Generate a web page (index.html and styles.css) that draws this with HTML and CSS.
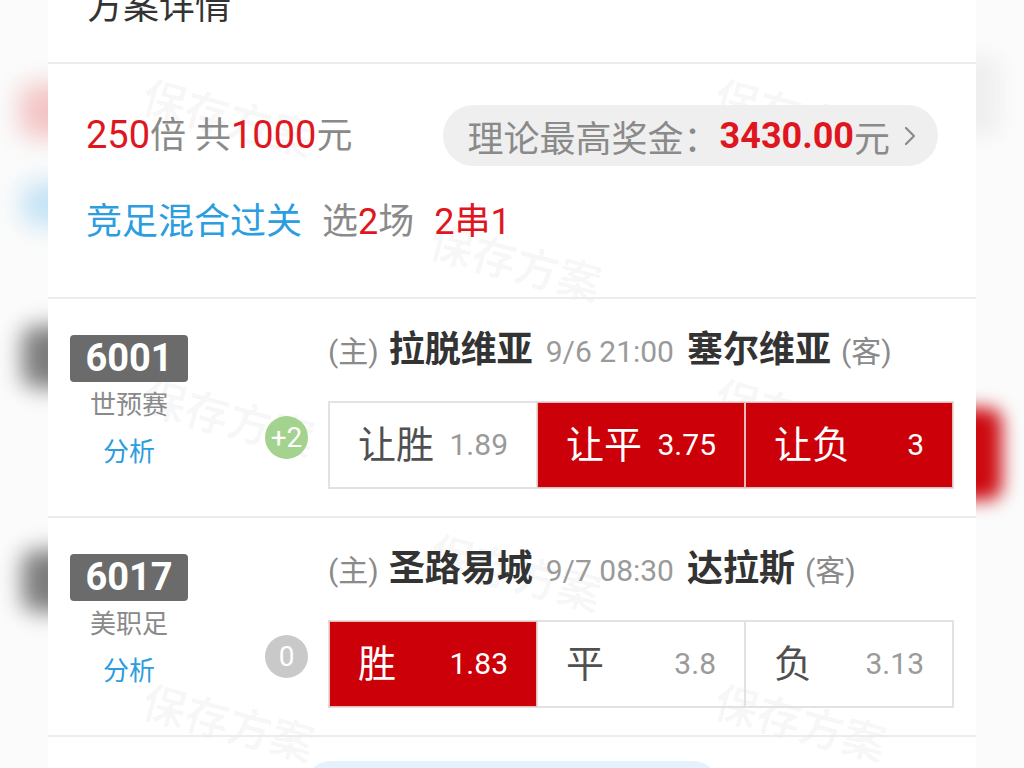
FILE: index.html
```html
<!DOCTYPE html>
<html lang="zh-CN">
<head>
  <meta charset="UTF-8" />
  <meta name="viewport" content="width=device-width, initial-scale=1.0"/>
  <title>方案详情</title>
  <link rel="stylesheet" href="styles.css">
</head>
<body>
  <!-- blurred copy of the screen behind the column -->
  <div class="backdrop">
    <div class="blob pink"></div>
    <div class="blob blue"></div>
    <div class="blob gray g1"></div>
    <div class="blob gray g2"></div>
    <div class="blob light"></div>
    <div class="blob red-blob"></div>
  </div>

  <div class="sheet">
    <div class="watermarks">
      <span class="wm">保存方案</span>
      <span class="wm">保存方案</span>
      <span class="wm">保存方案</span>
      <span class="wm">保存方案</span>
      <span class="wm">保存方案</span>
      <span class="wm">保存方案</span>
      <span class="wm">保存方案</span>
      <span class="wm">保存方案</span>
    </div>

    <div class="page-head">
      <h1>方案详情</h1>
    </div>

    <!-- summary -->
    <div class="summary">
      <div class="summary-top">
        <div class="stake">
          <span class="amount red">250</span>倍 共<span class="amount red">1000</span>元
        </div>
        <a class="prize" href="#">
          理论最高奖金：<b class="red">3430.00</b>元
          <svg class="chevron" width="14" height="20" viewBox="0 0 14 20">
            <path d="M3 2 L11 10 L3 18" fill="none" stroke="#8a8a8a" stroke-width="2.2" stroke-linecap="round" stroke-linejoin="round"/>
          </svg>
        </a>
      </div>
      <div class="play">
        <span class="blue-text">竞足混合过关</span>
        <span class="pick">选<span class="red">2</span>场</span>
        <span class="red pass">2串1</span>
      </div>
    </div>

    <!-- match 1 -->
    <div class="match">
      <div class="match-info">
        <div class="code">6001</div>
        <div class="league">世预赛</div>
        <a class="analysis" href="#">分析</a>
      </div>
      <div class="match-main">
        <div class="teams">
          <span class="side">(主)</span>
          <span class="team">拉脱维亚</span>
          <span class="time">9/6 21:00</span>
          <span class="team">塞尔维亚</span>
          <span class="side">(客)</span>
        </div>
        <div class="handicap plus">+2</div>
        <div class="options">
          <div class="cell"><span class="opt-name">让胜</span><span class="odds">1.89</span></div>
          <div class="cell on"><span class="opt-name">让平</span><span class="odds">3.75</span></div>
          <div class="cell on"><span class="opt-name">让负</span><span class="odds">3</span></div>
        </div>
      </div>
    </div>

    <!-- match 2 -->
    <div class="match">
      <div class="match-info">
        <div class="code">6017</div>
        <div class="league">美职足</div>
        <a class="analysis" href="#">分析</a>
      </div>
      <div class="match-main">
        <div class="teams">
          <span class="side">(主)</span>
          <span class="team">圣路易城</span>
          <span class="time">9/7 08:30</span>
          <span class="team">达拉斯</span>
          <span class="side">(客)</span>
        </div>
        <div class="handicap zero">0</div>
        <div class="options">
          <div class="cell on"><span class="opt-name">胜</span><span class="odds">1.83</span></div>
          <div class="cell"><span class="opt-name">平</span><span class="odds">3.8</span></div>
          <div class="cell"><span class="opt-name">负</span><span class="odds">3.13</span></div>
        </div>
      </div>
    </div>

    <div class="footer">
      <div class="save-btn"></div>
    </div>
  </div>
</body>
</html>
```

FILE: styles.css
```css
* {
  box-sizing: border-box;
}
body {
  margin: 0;
  height: 768px;
  overflow: hidden;
  background: #fbfbfb;
  font-family: Roboto, "Noto Sans CJK SC", sans-serif;
  color: #333;
  position: relative;
}
a {
  text-decoration: none;
}
.red {
  color: #e0161f;
}

/* blurred background */
.backdrop {
  position: absolute;
  inset: 0;
  overflow: hidden;
}
.blob {
  position: absolute;
  border-radius: 14px;
}
.pink {
  left: 20px;
  top: 84px;
  width: 70px;
  height: 54px;
  background: #f3c4c4;
  filter: blur(12px);
}
.blue {
  left: 22px;
  top: 182px;
  width: 70px;
  height: 44px;
  background: #c4e2f5;
  filter: blur(12px);
}
.gray {
  left: 22px;
  width: 80px;
  height: 62px;
  background: #7c7c7c;
  filter: blur(11px);
}
.g1 {
  top: 326px;
}
.g2 {
  top: 550px;
}
.light {
  left: 940px;
  top: 56px;
  width: 60px;
  height: 80px;
  background: #efefef;
  filter: blur(10px);
}
.red-blob {
  left: 930px;
  top: 408px;
  width: 72px;
  height: 92px;
  background: #cc0a10;
  filter: blur(9px);
}

/* white column */
.sheet {
  position: relative;
  isolation: isolate;
  width: 928px;
  margin: 0 auto;
  background: #fff;
  min-height: 768px;
}
.watermarks {
  position: absolute;
  inset: 0;
  z-index: -1;
  overflow: hidden;
}
.wm {
  position: absolute;
  width: 180px;
  font-size: 44px;
  font-weight: bold;
  line-height: 50px;
  color: rgba(0, 0, 0, 0.03);
  transform: rotate(15deg);
  white-space: nowrap;
}
.wm:nth-child(1) { left: 92px; top: 95px; }
.wm:nth-child(2) { left: 664px; top: 95px; }
.wm:nth-child(3) { left: 379px; top: 240px; }
.wm:nth-child(4) { left: 92px; top: 395px; }
.wm:nth-child(5) { left: 664px; top: 395px; }
.wm:nth-child(6) { left: 379px; top: 550px; }
.wm:nth-child(7) { left: 92px; top: 700px; }
.wm:nth-child(8) { left: 664px; top: 700px; }

.page-head {
  height: 64px;
  border-bottom: 2px solid #ececec;
  padding-left: 39px;
}
.page-head h1 {
  margin: 0;
  font-size: 36px;
  font-weight: normal;
  line-height: 14px;
  color: #333;
}

/* summary */
.summary {
  padding: 41px 38px 55px 38px;
  border-bottom: 2px solid #ececec;
}
.summary-top {
  display: flex;
  align-items: center;
  justify-content: space-between;
  height: 61px;
}
.stake {
  font-size: 36px;
  color: #8a8a8a;
  line-height: 40px;
}
.amount {
  font-size: 38px;
}
.prize {
  display: flex;
  align-items: center;
  height: 61px;
  padding: 0 21px 0 25px;
  background: #efefef;
  border-radius: 31px;
  font-size: 36px;
  color: #8a8a8a;
}
.prize b {
  font-weight: bold;
}
.chevron {
  margin-left: 13px;
}
.play {
  margin-top: 36px;
  font-size: 36px;
  line-height: 40px;
  color: #8a8a8a;
  display: flex;
  gap: 20px;
}
.blue-text {
  color: #2b9de0;
}

/* match rows */
.match {
  display: flex;
  padding: 36px 22px 27px;
  border-bottom: 2px solid #ececec;
}
.match-info {
  width: 118px;
  display: flex;
  flex-direction: column;
  align-items: center;
}
.code {
  width: 118px;
  height: 47px;
  line-height: 47px;
  text-align: center;
  background: #6b6b6b;
  border-radius: 4px;
  color: #fff;
  font-size: 38px;
  font-weight: bold;
}
.league {
  margin-top: 8px;
  font-size: 26px;
  line-height: 30px;
  color: #8a8a8a;
}
.analysis {
  margin-top: 17px;
  font-size: 26px;
  line-height: 30px;
  color: #2b9de0;
}
.match-main {
  flex: 1;
  margin-left: 77px;
  display: grid;
  grid-template-columns: 43px 1fr;
  column-gap: 20px;
}
.teams {
  grid-column: 2;
  grid-row: 1;
  height: 30px;
  margin-bottom: 36px;
  display: flex;
  align-items: baseline;
  gap: 10px;
  line-height: 30px;
  white-space: nowrap;
}
.side {
  font-size: 30px;
  color: #8a8a8a;
}
.team {
  font-size: 36px;
  font-weight: bold;
  color: #333;
}
.time {
  font-size: 30px;
  color: #9a9a9a;
  margin: 0 3px;
}
.handicap {
  grid-column: 1;
  grid-row: 2;
  align-self: center;
  margin-bottom: 15px;
  width: 43px;
  height: 43px;
  border-radius: 50%;
  color: #fff;
  font-size: 28px;
  line-height: 43px;
  text-align: center;
}
.plus {
  background: #a3d38e;
}
.zero {
  background: #c9c9c9;
}
.options {
  grid-column: 2;
  grid-row: 2;
  display: grid;
  grid-template-columns: repeat(3, 1fr);
  height: 88px;
  border: 1px solid #e2e2e2;
}
.cell {
  display: flex;
  align-items: center;
  justify-content: space-between;
  padding: 0 28px;
  border: 1px solid #e2e2e2;
}
.opt-name {
  font-size: 38px;
  line-height: 44px;
  color: #505050;
}
.odds {
  font-size: 30px;
  line-height: 36px;
  color: #9a9a9a;
}
.cell.on {
  background: #cb0008;
  border-color: #ebb8b8;
}
.cell.on .opt-name,
.cell.on .odds {
  color: #fff;
}

.footer {
  padding-top: 24px;
  display: flex;
  justify-content: center;
}
.save-btn {
  width: 420px;
  height: 60px;
  border-radius: 30px;
  background: #e4f2fd;
}
```
